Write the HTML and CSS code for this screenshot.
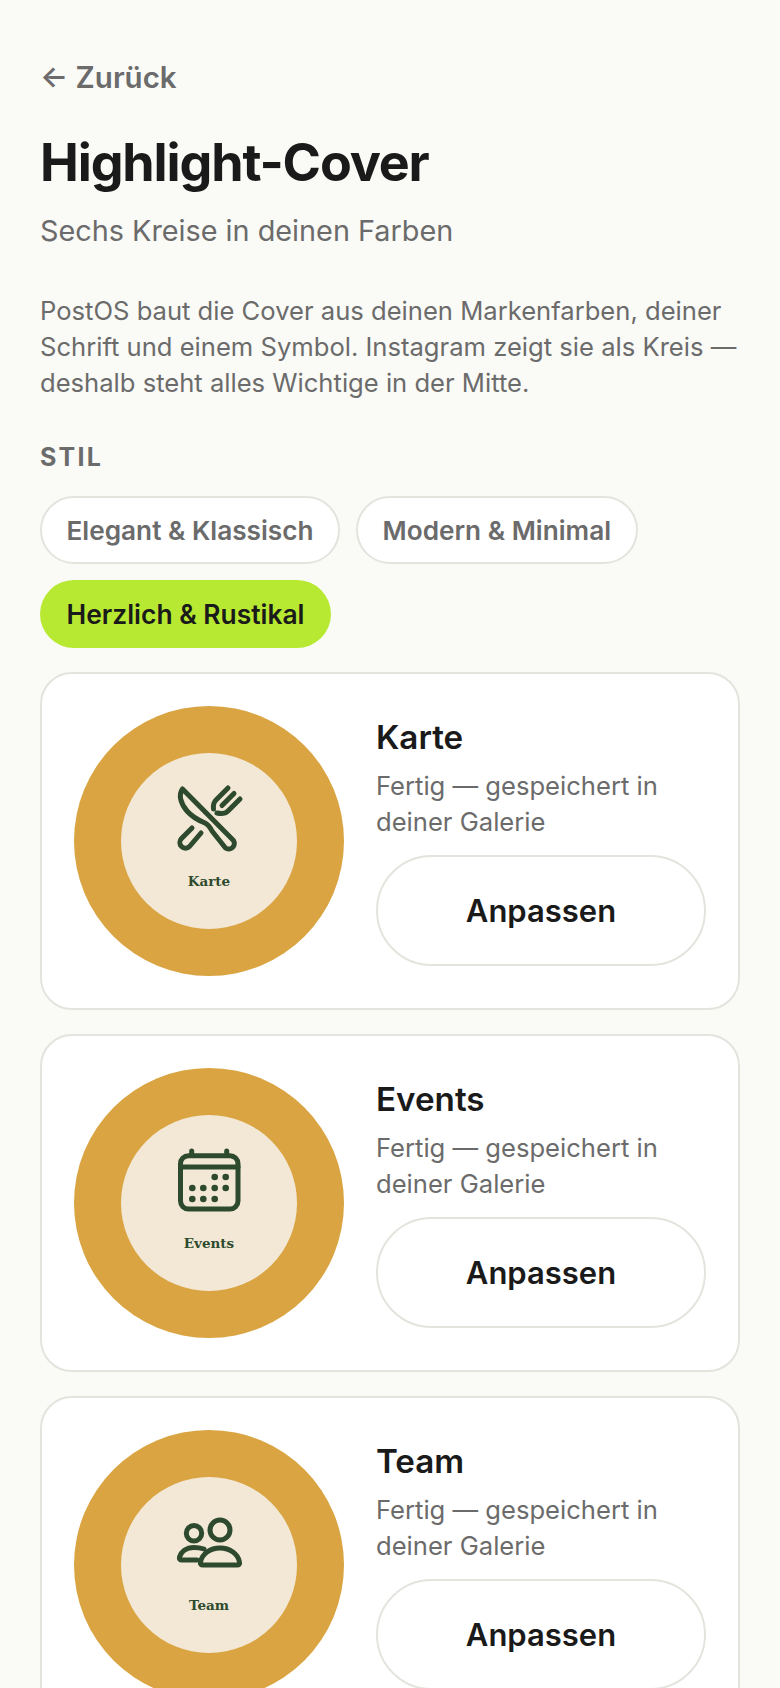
FILE: index.html
```html
<!DOCTYPE html>
<html lang="de">
<head>
<meta charset="utf-8">
<title>Highlight-Cover</title>
<link rel="stylesheet" href="styles.css">
</head>
<body>
<main class="page">
  <a class="back">← Zurück</a>
  <h1 class="title">Highlight-Cover</h1>
  <p class="subtitle">Sechs Kreise in deinen Farben</p>
  <p class="intro">PostOS baut die Cover aus deinen Markenfarben, deiner Schrift und einem Symbol. Instagram zeigt sie als Kreis — deshalb steht alles Wichtige in der Mitte.</p>
  <div class="section-label">STIL</div>
  <div class="chips">
    <button class="chip">Elegant &amp; Klassisch</button>
    <button class="chip">Modern &amp; Minimal</button>
    <button class="chip chip-active">Herzlich &amp; Rustikal</button>
  </div>
  <div class="cards">
    <section class="card">
      <div class="cover">
        <div class="cover-inner">
          <svg class="cover-icon" viewBox="0 0 72 72">
            <path d="M9.5 6 L60.5 57.5 A5.6 5.6 0 0 1 52.5 65 L39 48 C37 44 35 41.5 32 40 C26 37.5 20 35 14 28 C8 21 5 12 9.5 6Z"/>
            <path d="M19 45 L8.5 55.5 A5.6 5.6 0 0 0 16.5 63.5 L28 50"/>
            <path d="M40.5 26 C40 22 41 19 43 17 L55 5 M61 10.5 L49 22.5 M67 16 L55 28 C52 31 48 31 44 30"/>
          </svg>
          <span class="cover-label">Karte</span>
        </div>
      </div>
      <div class="info">
        <h2 class="info-title">Karte</h2>
        <p class="info-text">Fertig — gespeichert in deiner Galerie</p>
        <button class="action">Anpassen</button>
      </div>
    </section>
    <section class="card">
      <div class="cover">
        <div class="cover-inner">
          <svg class="cover-icon" viewBox="0 0 72 72">
            <rect x="7.5" y="10.7" width="57.5" height="53.3" rx="8"/>
            <path d="M7.5 22 H65 M18.7 6 V10 M53.7 6 V10"/>
            <g class="dots">
              <circle cx="41.7" cy="32" r="3.3"/><circle cx="52.7" cy="32" r="3.3"/>
              <circle cx="19.3" cy="43" r="3.3"/><circle cx="30.3" cy="43" r="3.3"/><circle cx="41.7" cy="43" r="3.3"/><circle cx="52.7" cy="43" r="3.3"/>
              <circle cx="19.3" cy="54" r="3.3"/><circle cx="30.3" cy="54" r="3.3"/><circle cx="41.7" cy="54" r="3.3"/>
            </g>
          </svg>
          <span class="cover-label">Events</span>
        </div>
      </div>
      <div class="info">
        <h2 class="info-title">Events</h2>
        <p class="info-text">Fertig — gespeichert in deiner Galerie</p>
        <button class="action">Anpassen</button>
      </div>
    </section>
    <section class="card">
      <div class="cover">
        <div class="cover-inner">
          <svg class="cover-icon" viewBox="0 0 72 72">
            <circle cx="21" cy="26.3" r="7.7"/>
            <circle cx="47" cy="23" r="10"/>
            <path d="M27.5 55 C29 47 37 41 47 41 C57 41 65 47 66.5 55 C67 57 66 58 64 58 H30 C28 58 27 57 27.5 55Z"/>
            <path d="M31 42 C28 41 25 40.5 21 40.5 C13 40.5 8 45 6.5 50 C6 52 7 53 9 53 H24"/>
          </svg>
          <span class="cover-label">Team</span>
        </div>
      </div>
      <div class="info">
        <h2 class="info-title">Team</h2>
        <p class="info-text">Fertig — gespeichert in deiner Galerie</p>
        <button class="action">Anpassen</button>
      </div>
    </section>
  </div>
</main>
</body>
</html>
```
FILE: styles.css
```css
* { box-sizing: border-box; }
html, body { margin: 0; padding: 0; height: 100%; overflow: hidden; }
body { background: #fafaf6; color: #1a1a1a; font-family: Inter, "Liberation Sans", sans-serif; }
.page { padding: 58px 40px 40px; }
.back { display: block; font-size: 29.5px; font-weight: 600; line-height: 38px; color: #6b6b6b; }
.title { margin: 35px 0 0; font-size: 52px; line-height: 64px; font-weight: 700; letter-spacing: -1.15px; }
.subtitle { margin: 18px 0 0; font-size: 28.8px; line-height: 36px; color: #6b6b6b; }
.intro { margin: 44px 0 0; font-size: 25.6px; line-height: 36px; color: #6b6b6b; }
.section-label { margin-top: 40px; font-size: 25px; line-height: 32px; font-weight: 700; letter-spacing: 2.2px; color: #6b6b6b; }
.chips { display: flex; flex-wrap: wrap; gap: 16px; margin-top: 23px; }
.chip { height: 68px; padding: 0 24.5px; border: 2px solid #e4e4de; border-radius: 34px; background: #fff; font: 600 26.2px Inter, sans-serif; color: #6b6b6b; }
.chip-active { padding: 0 26.5px; border: 0; background: #b8e932; font-size: 26.4px; color: #1a1a1a; }
.cards { display: flex; flex-direction: column; gap: 24px; margin-top: 24px; }
.card { display: flex; gap: 32px; padding: 32px; border: 2px solid #e4e4de; border-radius: 32px; background: #fff; }
.cover { flex: none; display: flex; align-items: center; justify-content: center; width: 270px; height: 270px; border-radius: 50%; background: #d9a441; }
.cover-inner { display: flex; flex-direction: column; align-items: center; width: 176px; height: 176px; padding-top: 30px; border-radius: 50%; background: #f2e8d5; }
.cover-icon { width: 72px; height: 72px; fill: none; stroke: #2d4a2e; stroke-width: 5; stroke-linecap: round; stroke-linejoin: round; }
.dots circle { fill: #2d4a2e; stroke: none; }
.cover-label { margin-top: 16px; font-family: "DejaVu Serif", serif; font-size: 13.5px; line-height: 20px; font-weight: 700; color: #2d4a2e; }
.info { flex: 1; display: flex; flex-direction: column; min-width: 0; padding-top: 11px; }
.info-title { margin: 0; font-size: 33.2px; line-height: 40px; font-weight: 600; }
.info-text { margin: 11px 0 0; font-size: 25.6px; line-height: 36px; color: #6b6b6b; }
.action { height: 111px; margin-top: 14.5px; border: 2px solid #e4e4de; border-radius: 56px; background: #fff; font: 600 31px Inter, sans-serif; color: #1a1a1a; }
```
